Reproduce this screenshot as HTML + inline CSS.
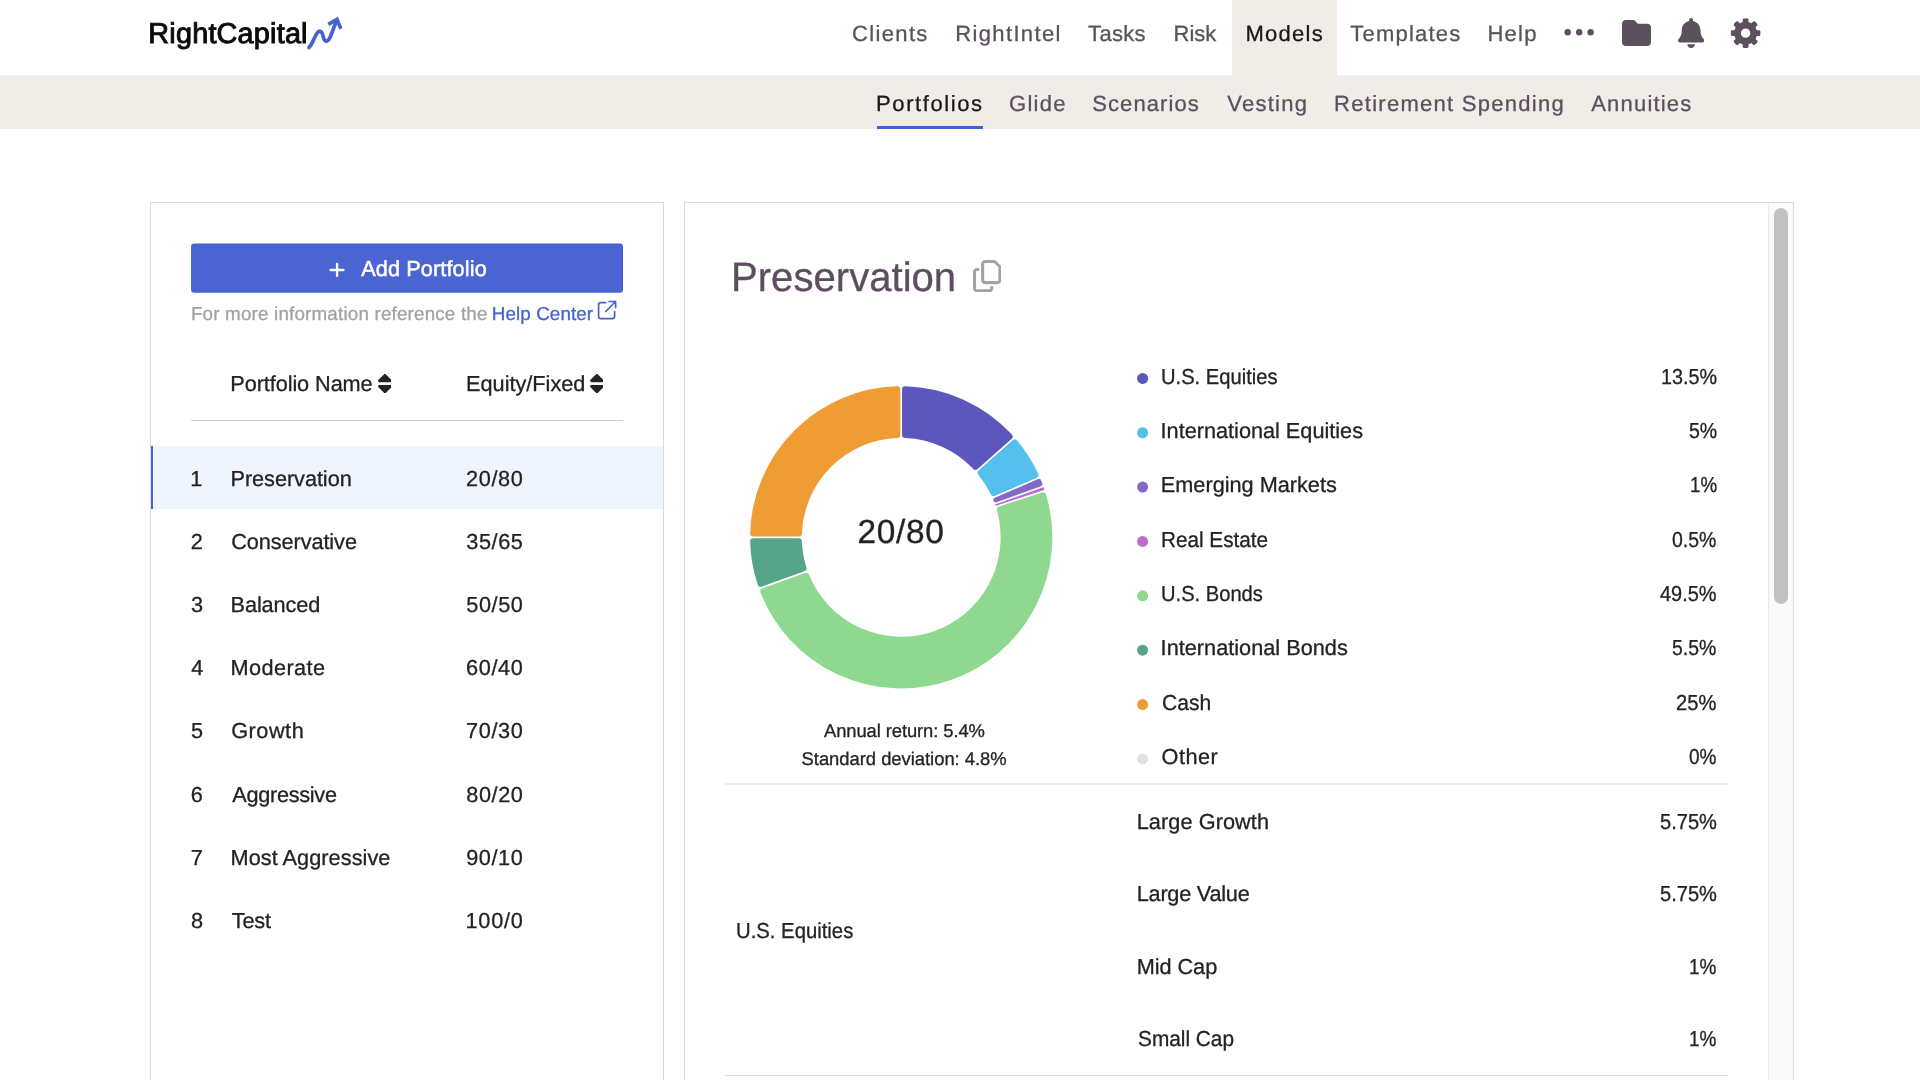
<!DOCTYPE html>
<html><head><meta charset="utf-8"><title>RightCapital - Models</title>
<style>
html,body{margin:0;padding:0;background:#fff;}
body{width:1920px;height:1080px;position:relative;overflow:hidden;font-family:"Liberation Sans",sans-serif;}
.abs{position:absolute;}
.t{position:absolute;white-space:pre;line-height:1;font-family:"Liberation Sans",sans-serif;transform-origin:0 50%;-webkit-text-stroke:0.3px;text-rendering:geometricPrecision;}
</style></head><body>
<!-- header -->
<div class="abs" style="left:0;top:75px;width:1920px;height:1px;background:#f7f5f3"></div>
<div class="abs" style="left:0;top:76px;width:1920px;height:53px;background:#f0ece8"></div>
<div class="abs" style="left:1232px;top:0;width:105px;height:76px;background:#f0ece8"></div>
<div class="abs" style="left:876.5px;top:126px;width:106.8px;height:3px;background:#4762d0"></div>
<!-- logo arrow -->
<svg class="abs" style="left:300px;top:10px" width="50" height="45" viewBox="300 10 50 45"><path d="M308.9 47.6 C313.5 43.5 315.5 31.3 319.8 31.1 C323.6 31 322.6 41.2 326.3 41.2 C330.2 41.2 333.6 27 336.6 20.4" fill="none" stroke="#4762d0" stroke-width="3.7" stroke-linecap="round" stroke-linejoin="round"/><path d="M328.3 24.3 L337.0 19.3 L340.9 28.9" fill="none" stroke="#4762d0" stroke-width="3.7" stroke-linecap="butt" stroke-linejoin="miter"/></svg>
<!-- left panel -->
<div class="abs" style="left:150px;top:202px;width:512px;height:900px;border:1px solid #dedad6;background:#fff"></div>
<svg class="abs" style="left:0;top:0" width="700" height="300" viewBox="0 0 700 300"><rect x="191.1" y="243.55" width="431.9" height="49.25" rx="3.2" fill="#3f5ecc"/><rect x="192.1" y="244.55" width="429.9" height="47.25" rx="2.4" fill="#4a65d2"/></svg>
<svg class="abs" style="left:320px;top:255px" width="34" height="30" viewBox="320 255 34 30"><path d="M330.5 270H343.5M337.050 263.800V276" fill="none" stroke="#fff" stroke-width="2.3" stroke-linecap="round"/></svg>
<svg class="abs" style="left:595px;top:298px" width="25" height="25" viewBox="595 298 25 25"><path d="M605.6 302.6H600.8a2.200 2.200 0 0 0 -2.200 2.200V316.400a2.200 2.200 0 0 0 2.200 2.200H612.400a2.200 2.200 0 0 0 2.200 -2.200V311.500M605.700 311.500L615.600 301.500M609.100 301.500H615.600V307.600" fill="none" stroke="#4762d0" stroke-width="1.7" stroke-linecap="round" stroke-linejoin="round"/></svg>
<div class="abs" style="left:191px;top:420px;width:432px;height:1px;background:#cdcdcd"></div>
<div class="abs" style="left:151px;top:446px;width:512px;height:63px;background:#eef5ff"></div>
<div class="abs" style="left:151px;top:446px;width:2px;height:63px;background:#4964d0"></div>
<!-- right panel -->
<div class="abs" style="left:684px;top:202px;width:1108px;height:900px;border:1px solid #dedad6;background:#fff"></div>
<div class="abs" style="left:1768px;top:203px;width:24px;height:900px;background:#fafafa;border-left:1px solid #e8e8e8"></div>
<div class="abs" style="left:1774px;top:208px;width:14px;height:396px;border-radius:7px;background:#c1c1c1"></div>
<div class="abs" style="left:725px;top:783px;width:1003px;height:2px;background:#efebe7"></div>
<div class="abs" style="left:725px;top:1075px;width:1002.5px;height:1px;background:#e2dcd5"></div>
<svg class="abs" style="left:0;top:0" width="1920" height="1080" viewBox="0 0 1920 1080"><path d="M905.35 389.66A147.80 147.80 0 0 1 1009.28 436.58L975.43 466.43A102.70 102.70 0 0 0 905.35 434.78Z" fill="#5b57bd" stroke="#5b57bd" stroke-width="6.60" stroke-linejoin="round"/><path d="M1014.77 442.81A147.80 147.80 0 0 1 1035.14 474.92L993.73 492.84A102.70 102.70 0 0 0 980.92 472.65Z" fill="#55bfee" stroke="#55bfee" stroke-width="6.60" stroke-linejoin="round"/><path d="M1039.02 481.11A148.88 148.88 0 0 1 1040.21 484.09L995.73 500.10A101.62 101.62 0 0 0 995.64 499.88Z" fill="#8468c6" stroke="#8468c6" stroke-width="4.45" stroke-linejoin="round"/><path d="M1043.25 487.87A150.44 150.44 0 0 1 1043.80 489.48L995.89 505.05A100.06 100.06 0 0 0 995.85 504.93Z" fill="#bd6ccc" stroke="#bd6ccc" stroke-width="1.32" stroke-linejoin="round"/><path d="M1042.99 495.69A147.80 147.80 0 0 1 763.60 591.35L806.06 576.06A102.70 102.70 0 0 0 1000.08 509.64Z" fill="#8fd88f" stroke="#8fd88f" stroke-width="6.60" stroke-linejoin="round"/><path d="M760.79 583.54A147.80 147.80 0 0 1 753.46 541.55L798.58 541.55A102.70 102.70 0 0 0 803.24 568.26Z" fill="#55a58a" stroke="#55a58a" stroke-width="6.60" stroke-linejoin="round"/><path d="M753.46 533.25A147.80 147.80 0 0 1 897.05 389.66L897.05 434.78A102.70 102.70 0 0 0 798.58 533.25Z" fill="#ef9c35" stroke="#ef9c35" stroke-width="6.60" stroke-linejoin="round"/></svg>
<svg class="abs" style="left:1130px;top:360px" width="24" height="420" viewBox="1130 360 24 420"><circle cx="1142.6" cy="378.40" r="5.5" fill="#5b57bd"/><circle cx="1142.6" cy="432.76" r="5.5" fill="#55bfee"/><circle cx="1142.6" cy="487.12" r="5.5" fill="#8468c6"/><circle cx="1142.6" cy="541.48" r="5.5" fill="#bd6ccc"/><circle cx="1142.6" cy="595.84" r="5.5" fill="#8fd88f"/><circle cx="1142.6" cy="650.20" r="5.5" fill="#55a58a"/><circle cx="1142.6" cy="704.56" r="5.5" fill="#ef9c35"/><circle cx="1142.6" cy="758.92" r="5.5" fill="#e4e1df"/></svg>
<svg class="abs" style="left:1622px;top:20px" width="29" height="26" viewBox="0 32 512 448" preserveAspectRatio="none"><path d="M64 480H448c35.3 0 64-28.700 64-64V160c0-35.300-28.700-64-64-64H288c-10.100 0-19.600-4.700-25.600-12.800L243.200 57.600C231.100 41.500 212.100 32 192 32H64C28.700 32 0 60.700 0 96V416c0 35.300 28.700 64 64 64z" fill="#5c4f5e"/></svg><svg class="abs" style="left:1677.75px;top:18px" width="26.25" height="30" viewBox="0 0 448 512" preserveAspectRatio="none"><path d="M224 0c-17.700 0-32 14.300-32 32V51.200C119 66 64 130.600 64 208v18.800c0 47-17.300 92.400-48.500 127.600l-7.400 8.300c-8.400 9.400-10.400 22.900-5.300 34.400S19.400 416 32 416H416c12.600 0 24-7.400 29.200-18.900s3.100-25-5.300-34.400l-7.400-8.300C401.300 319.200 384 273.900 384 226.800V208c0-77.400-55-142-128-156.800V32c0-17.700-14.300-32-32-32zm45.300 493.300c12-12 18.700-28.300 18.700-45.300H224 160c0 17 6.700 33.300 18.700 45.300s28.300 18.700 45.300 18.700s33.300-6.700 45.300-18.700z" fill="#5c4f5e"/></svg><svg class="abs" style="left:0;top:0" width="1920" height="80" viewBox="0 0 1920 80"><g fill="#5c4f5e" transform="translate(1745.6 33.15)"><path fill-rule="evenodd" d="M-11.4 0a11.4 11.4 0 1 0 22.8 0a11.4 11.4 0 1 0 -22.8 0ZM-4.7 0a4.7 4.7 0 1 1 9.400 0a4.700 4.700 0 1 1 -9.400 0Z"/><rect x="-2.9" y="-14.75" width="5.8" height="6" rx="1.3" transform="rotate(0)"/><rect x="-2.9" y="-14.75" width="5.8" height="6" rx="1.3" transform="rotate(45)"/><rect x="-2.9" y="-14.75" width="5.8" height="6" rx="1.3" transform="rotate(90)"/><rect x="-2.9" y="-14.75" width="5.8" height="6" rx="1.3" transform="rotate(135)"/><rect x="-2.9" y="-14.75" width="5.8" height="6" rx="1.3" transform="rotate(180)"/><rect x="-2.9" y="-14.75" width="5.8" height="6" rx="1.3" transform="rotate(225)"/><rect x="-2.9" y="-14.75" width="5.8" height="6" rx="1.3" transform="rotate(270)"/><rect x="-2.9" y="-14.75" width="5.8" height="6" rx="1.3" transform="rotate(315)"/></g></svg><svg class="abs" style="left:972.8px;top:260.1px" width="28.4" height="32.2" viewBox="0 0 448 512" preserveAspectRatio="none"><path d="M384 336H192c-8.800 0-16-7.200-16-16V64c0-8.800 7.200-16 16-16l140.100 0L400 115.900V320c0 8.800-7.200 16-16 16zM192 384H384c35.300 0 64-28.700 64-64V115.900c0-12.700-5.100-24.900-14.100-33.900L366.100 14.100c-9-9-21.200-14.100-33.900-14.100H192c-35.300 0-64 28.700-64 64V320c0 35.300 28.700 64 64 64zM64 128c-35.300 0-64 28.700-64 64V448c0 35.300 28.700 64 64 64H256c35.300 0 64-28.700 64-64V416H272v32c0 8.800-7.200 16-16 16H64c-8.800 0-16-7.200-16-16V192c0-8.800 7.200-16 16-16H96V128H64z" fill="#a6a1a4"/></svg><svg class="abs" style="left:377.5px;top:373.9px" width="13.9" height="19.1" viewBox="0 32 320 448" preserveAspectRatio="none"><path d="M137.400 41.400c12.500-12.500 32.800-12.500 45.300 0l128 128c9.200 9.200 11.900 22.900 6.900 34.900s-16.600 19.800-29.600 19.800H32c-12.900 0-24.600-7.800-29.600-19.800s-2.200-25.700 6.900-34.900l128-128zm0 429.300l-128-128c-9.200-9.200-11.900-22.900-6.900-34.900s16.600-19.800 29.600-19.800H288c12.900 0 24.600 7.800 29.600 19.800s2.200 25.700-6.900 34.900l-128 128c-12.500 12.500-32.800 12.500-45.300 0z" fill="#262223"/></svg><svg class="abs" style="left:589.6px;top:373.9px" width="13.9" height="19.1" viewBox="0 32 320 448" preserveAspectRatio="none"><path d="M137.400 41.400c12.500-12.500 32.800-12.500 45.300 0l128 128c9.200 9.200 11.900 22.900 6.900 34.900s-16.600 19.800-29.600 19.800H32c-12.900 0-24.600-7.800-29.600-19.800s-2.200-25.700 6.900-34.900l128-128zm0 429.300l-128-128c-9.200-9.200-11.900-22.900-6.900-34.900s16.600-19.800 29.600-19.800H288c12.900 0 24.600 7.800 29.600 19.800s2.200 25.700-6.900 34.900l-128 128c-12.500 12.500-32.800 12.500-45.300 0z" fill="#262223"/></svg><svg class="abs" style="left:1560px;top:24px" width="40" height="16" viewBox="1560 24 40 16"><circle cx="1567.7" cy="32.3" r="3.2" fill="#5c4f5e"/><circle cx="1579.2" cy="32.3" r="3.2" fill="#5c4f5e"/><circle cx="1590.6" cy="32.3" r="3.2" fill="#5c4f5e"/></svg>
<div class="abs" style="left:0;top:0;width:1920px;height:1080px;will-change:transform">
<header aria-label="Top navigation">
<span class="t" style="left:851.98px;top:23px;font-size:22px;color:#5c505e;letter-spacing:1.360px;">Clients</span>
<span class="t" style="left:955.30px;top:23px;font-size:22px;color:#5c505e;letter-spacing:1.347px;">RightIntel</span>
<span class="t" style="left:1088.11px;top:23px;font-size:22px;color:#5c505e;letter-spacing:0.310px;">Tasks</span>
<span class="t" style="left:1173.50px;top:23px;font-size:22px;color:#5c505e;letter-spacing:0.030px;">Risk</span>
<span class="t" style="left:1350.31px;top:23px;font-size:22px;color:#5c505e;letter-spacing:1.201px;">Templates</span>
<span class="t" style="left:1487.50px;top:23px;font-size:22px;color:#5c505e;letter-spacing:1.226px;">Help</span>
<span class="t" style="left:1245.50px;top:23px;font-size:22px;color:#1c181a;letter-spacing:1.256px;">Models</span>
<span class="t" style="left:148.34px;top:20px;font-size:28.8px;color:#0c0a0c;letter-spacing:0.210px;-webkit-text-stroke:0.95px #0c0a0c;">RightCapital</span>
</header>
<nav aria-label="Models sections">
<span class="t" style="left:876.10px;top:93px;font-size:22px;color:#1c181a;letter-spacing:1.587px;">Portfolios</span>
<span class="t" style="left:1009.09px;top:93px;font-size:22px;color:#5c505e;letter-spacing:1.256px;">Glide</span>
<span class="t" style="left:1092.20px;top:93px;font-size:22px;color:#5c505e;letter-spacing:1.094px;">Scenarios</span>
<span class="t" style="left:1227.20px;top:93px;font-size:22px;color:#5c505e;letter-spacing:1.274px;">Vesting</span>
<span class="t" style="left:1334.10px;top:93px;font-size:22px;color:#5c505e;letter-spacing:1.274px;">Retirement Spending</span>
<span class="t" style="left:1591.26px;top:93px;font-size:22px;color:#5c505e;letter-spacing:1.190px;">Annuities</span>
</nav>
<aside aria-label="Portfolio list">
<span class="t" style="left:361.26px;top:258px;font-size:21.7px;color:#ffffff;letter-spacing:0.106px;-webkit-text-stroke:0.5px #fff;">Add Portfolio</span>
<span class="t" style="left:190.96px;top:305px;font-size:18.8px;color:#a5a0a2;letter-spacing:0.189px;">For more information reference the</span>
<span class="t" style="left:491.81px;top:305px;font-size:18.8px;color:#4762d0;letter-spacing:0.104px;">Help Center</span>
<span class="t" style="left:230.27px;top:373px;font-size:21.7px;color:#262223;letter-spacing:-0.080px;">Portfolio Name</span>
<span class="t" style="left:466.12px;top:373px;font-size:21.7px;color:#262223;letter-spacing:-0.006px;">Equity/Fixed</span>
<span class="t" style="left:190.20px;top:468px;font-size:21.7px;color:#262223;">1</span>
<span class="t" style="left:230.52px;top:468px;font-size:21.7px;color:#262223;letter-spacing:-0.051px;">Preservation</span>
<span class="t" style="left:466.11px;top:468px;font-size:21.7px;color:#262223;letter-spacing:0.614px;">20/80</span>
<span class="t" style="left:190.76px;top:531px;font-size:21.7px;color:#262223;">2</span>
<span class="t" style="left:231.20px;top:531px;font-size:21.7px;color:#262223;letter-spacing:-0.074px;">Conservative</span>
<span class="t" style="left:466.37px;top:531px;font-size:21.7px;color:#262223;letter-spacing:0.564px;">35/65</span>
<span class="t" style="left:191.02px;top:594px;font-size:21.7px;color:#262223;">3</span>
<span class="t" style="left:230.52px;top:594px;font-size:21.7px;color:#262223;letter-spacing:-0.080px;">Balanced</span>
<span class="t" style="left:466.33px;top:594px;font-size:21.7px;color:#262223;letter-spacing:0.559px;">50/50</span>
<span class="t" style="left:191.35px;top:657px;font-size:21.7px;color:#262223;">4</span>
<span class="t" style="left:230.52px;top:657px;font-size:21.7px;color:#262223;letter-spacing:0.403px;">Moderate</span>
<span class="t" style="left:466.10px;top:657px;font-size:21.7px;color:#262223;letter-spacing:0.617px;">60/40</span>
<span class="t" style="left:190.98px;top:720px;font-size:21.7px;color:#262223;">5</span>
<span class="t" style="left:231.21px;top:720px;font-size:21.7px;color:#262223;letter-spacing:0.519px;">Growth</span>
<span class="t" style="left:466.09px;top:720px;font-size:21.7px;color:#262223;letter-spacing:0.620px;">70/30</span>
<span class="t" style="left:190.75px;top:784px;font-size:21.7px;color:#262223;">6</span>
<span class="t" style="left:232.26px;top:784px;font-size:21.7px;color:#262223;letter-spacing:-0.288px;">Aggressive</span>
<span class="t" style="left:466.26px;top:784px;font-size:21.7px;color:#262223;letter-spacing:0.577px;">80/20</span>
<span class="t" style="left:190.74px;top:847px;font-size:21.7px;color:#262223;">7</span>
<span class="t" style="left:230.52px;top:847px;font-size:21.7px;color:#262223;letter-spacing:0.052px;">Most Aggressive</span>
<span class="t" style="left:466.18px;top:847px;font-size:21.7px;color:#262223;letter-spacing:0.596px;">90/10</span>
<span class="t" style="left:190.91px;top:910px;font-size:21.7px;color:#262223;">8</span>
<span class="t" style="left:231.81px;top:910px;font-size:21.7px;color:#262223;letter-spacing:-0.212px;">Test</span>
<span class="t" style="left:465.55px;top:910px;font-size:21.7px;color:#262223;letter-spacing:0.755px;">100/0</span>
</aside>
<main aria-label="Portfolio detail">
<span class="t" style="left:730.71px;top:257px;font-size:41px;color:#5c4e5e;transform:scaleX(0.9782);">Preservation</span>
<span class="t" style="left:857.52px;top:516px;font-size:33.4px;color:#262223;letter-spacing:0.668px;">20/80</span>
<span class="t" style="left:823.96px;top:722px;font-size:18.4px;color:#262223;letter-spacing:-0.087px;">Annual return: 5.4%</span>
<span class="t" style="left:801.56px;top:750px;font-size:18.4px;color:#262223;letter-spacing:-0.018px;">Standard deviation: 4.8%</span>
<span class="t" style="left:1161.04px;top:366px;font-size:21.7px;color:#262223;transform:scaleX(0.9299);">U.S. Equities</span>
<span class="t" style="left:1660.69px;top:366px;font-size:21.7px;color:#262223;transform:scaleX(0.9107);">13.5%</span>
<span class="t" style="left:1160.60px;top:420px;font-size:21.7px;color:#262223;letter-spacing:-0.008px;">International Equities</span>
<span class="t" style="left:1688.52px;top:420px;font-size:21.7px;color:#262223;transform:scaleX(0.8985);">5%</span>
<span class="t" style="left:1160.82px;top:474px;font-size:21.7px;color:#262223;">Emerging Markets</span>
<span class="t" style="left:1689.57px;top:474px;font-size:21.7px;color:#262223;transform:scaleX(0.8641);">1%</span>
<span class="t" style="left:1160.90px;top:529px;font-size:21.7px;color:#262223;transform:scaleX(0.9554);">Real Estate</span>
<span class="t" style="left:1672.34px;top:529px;font-size:21.7px;color:#262223;transform:scaleX(0.8972);">0.5%</span>
<span class="t" style="left:1161.05px;top:583px;font-size:21.7px;color:#262223;transform:scaleX(0.9287);">U.S. Bonds</span>
<span class="t" style="left:1660.14px;top:583px;font-size:21.7px;color:#262223;transform:scaleX(0.9198);">49.5%</span>
<span class="t" style="left:1160.60px;top:637px;font-size:21.7px;color:#262223;letter-spacing:0.016px;">International Bonds</span>
<span class="t" style="left:1672.32px;top:637px;font-size:21.7px;color:#262223;transform:scaleX(0.8976);">5.5%</span>
<span class="t" style="left:1161.53px;top:692px;font-size:21.7px;color:#262223;transform:scaleX(0.9703);">Cash</span>
<span class="t" style="left:1676.39px;top:692px;font-size:21.7px;color:#262223;transform:scaleX(0.9288);">25%</span>
<span class="t" style="left:1161.57px;top:746px;font-size:21.7px;color:#262223;letter-spacing:0.510px;">Other</span>
<span class="t" style="left:1689.26px;top:746px;font-size:21.7px;color:#262223;transform:scaleX(0.8743);">0%</span>
<span class="t" style="left:1136.72px;top:811px;font-size:21.7px;color:#262223;letter-spacing:0.080px;">Large Growth</span>
<span class="t" style="left:1659.80px;top:811px;font-size:21.7px;color:#262223;transform:scaleX(0.9255);">5.75%</span>
<span class="t" style="left:1136.72px;top:883px;font-size:21.7px;color:#262223;letter-spacing:-0.232px;">Large Value</span>
<span class="t" style="left:1659.80px;top:883px;font-size:21.7px;color:#262223;transform:scaleX(0.9255);">5.75%</span>
<span class="t" style="left:1136.72px;top:956px;font-size:21.7px;color:#262223;letter-spacing:-0.046px;">Mid Cap</span>
<span class="t" style="left:1689.25px;top:956px;font-size:21.7px;color:#262223;transform:scaleX(0.8744);">1%</span>
<span class="t" style="left:1137.55px;top:1028px;font-size:21.7px;color:#262223;transform:scaleX(0.9598);">Small Cap</span>
<span class="t" style="left:1689.25px;top:1028px;font-size:21.7px;color:#262223;transform:scaleX(0.8744);">1%</span>
<span class="t" style="left:735.63px;top:920px;font-size:21.7px;color:#262223;transform:scaleX(0.9356);">U.S. Equities</span>
</main>
</div>
</body></html>
